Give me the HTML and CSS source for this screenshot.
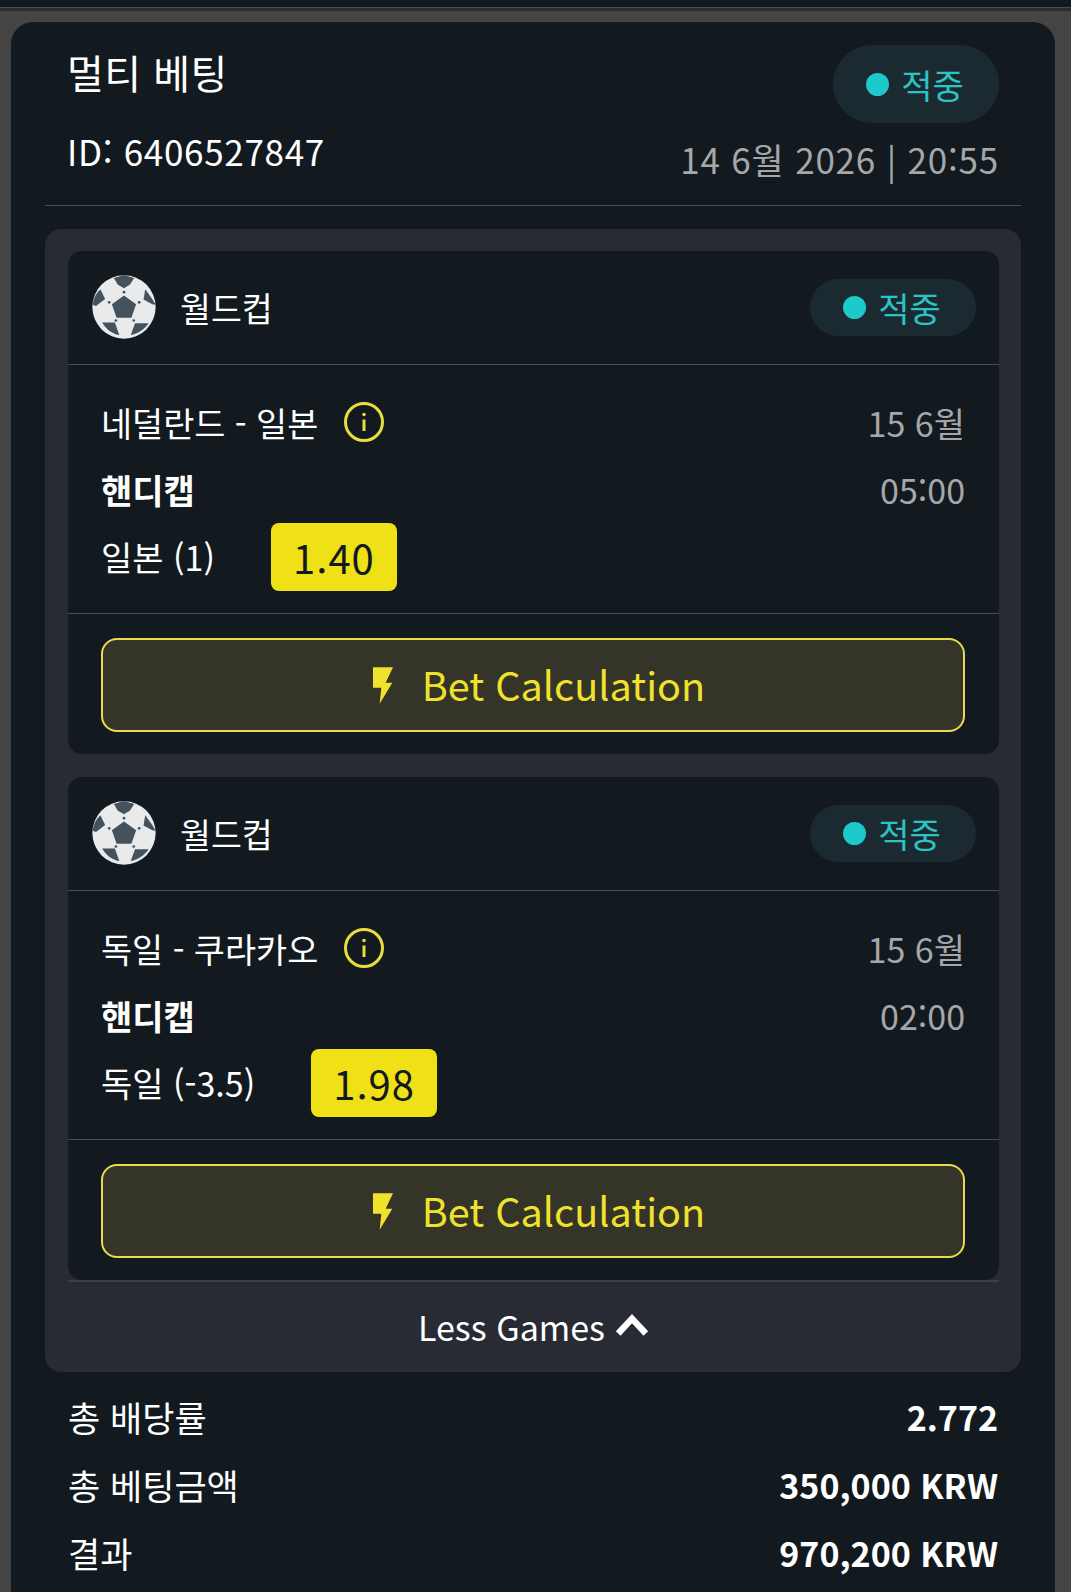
FILE: index.html
```html
<!DOCTYPE html>
<html lang="ko">
<head>
    <meta charset="UTF-8">
    <meta name="viewport" content="width=device-width, initial-scale=1.0">
    <title>멀티 베팅</title>
    <link rel="stylesheet" href="styles.css">
</head>
<body>
    <svg width="0" height="0" class="defs">
        <symbol id="ball" viewBox="37 15 190 190">
            <circle cx="132" cy="110" r="94" fill="#e8eaec"/>
            <g fill="#43525d">
                <path d="M132 76 168 102 154 142H110L96 102Z"/>
                <path d="M102 24 132 15 162 24 150 43 132 54 113 43Z"/>
                <path d="M62 57 76 86 49 107 39 103C41 84 49 69 62 57Z"/>
                <path d="M195 57 216 86 226 103 216 102 190 88Z"/>
                <path d="M67 156H105L118 193C96 190 80 176 67 156Z"/>
                <path d="M165 158H205C193 176 172 190 152 193Z"/>
                <circle cx="132" cy="66" r="4"/>
                <circle cx="88" cy="96" r="4"/>
                <circle cx="177" cy="96" r="4"/>
                <circle cx="108" cy="150" r="4"/>
                <circle cx="161" cy="150" r="4"/>
            </g>
        </symbol>
        <symbol id="info" viewBox="0 0 40 40">
            <circle cx="20" cy="20" r="18.5" fill="none" stroke="#e9dc3c" stroke-width="3"/>
            <path d="M20 17.5V29" stroke="#e9dc3c" stroke-width="3"/>
            <circle cx="20" cy="12.5" r="1.8" fill="#e9dc3c"/>
        </symbol>
        <symbol id="bolt" viewBox="0 0 60 110">
            <path d="M0 0H60L38 47H58L20 110 25 62H0Z" fill="#f0e22c"/>
        </symbol>
    </svg>

    <div class="topbar"></div>

    <div class="bet-card">
        <div class="bet-head">
            <div class="bet-head-left">
                <div class="bet-title">멀티 베팅</div>
                <div class="bet-id">ID: 6406527847</div>
            </div>
            <div class="bet-head-right">
                <div class="status"><span class="status-dot"></span>적중</div>
                <div class="bet-date">14 6월 2026 | 20:55</div>
            </div>
        </div>

        <div class="games">
            <div class="game">
                <div class="game-head">
                    <svg class="ball"><use href="#ball"/></svg>
                    <span class="league">월드컵</span>
                    <div class="status status-small"><span class="status-dot"></span>적중</div>
                </div>
                <div class="game-body">
                    <div class="game-row game-row-first">
                        <div class="match">네덜란드 - 일본 <svg class="info"><use href="#info"/></svg></div>
                        <div class="game-time">15 6월</div>
                    </div>
                    <div class="game-row">
                        <div class="market">핸디캡</div>
                        <div class="game-time">05:00</div>
                    </div>
                    <div class="pick">
                        <span>일본 (1)</span>
                        <span class="odds">1.40</span>
                    </div>
                </div>
                <div class="game-foot">
                    <button class="calc"><svg class="bolt"><use href="#bolt"/></svg>Bet Calculation</button>
                </div>
            </div>

            <div class="game">
                <div class="game-head">
                    <svg class="ball"><use href="#ball"/></svg>
                    <span class="league">월드컵</span>
                    <div class="status status-small"><span class="status-dot"></span>적중</div>
                </div>
                <div class="game-body">
                    <div class="game-row game-row-first">
                        <div class="match">독일 - 쿠라카오 <svg class="info"><use href="#info"/></svg></div>
                        <div class="game-time">15 6월</div>
                    </div>
                    <div class="game-row">
                        <div class="market">핸디캡</div>
                        <div class="game-time">02:00</div>
                    </div>
                    <div class="pick">
                        <span>독일 (-3.5)</span>
                        <span class="odds">1.98</span>
                    </div>
                </div>
                <div class="game-foot">
                    <button class="calc"><svg class="bolt"><use href="#bolt"/></svg>Bet Calculation</button>
                </div>
            </div>

            <div class="less">
                Less Games
                <svg class="chevron" viewBox="0 0 32 22"><path d="M3 19 16 5 29 19" fill="none" stroke="#ffffff" stroke-width="6"/></svg>
            </div>
        </div>

        <div class="totals">
            <div class="total-row"><span>총 배당률</span><b>2.772</b></div>
            <div class="total-row"><span>총 베팅금액</span><b>350,000 KRW</b></div>
            <div class="total-row"><span>결과</span><b>970,200 KRW</b></div>
        </div>
    </div>
</body>
</html>
```

FILE: styles.css
```css
body {
    font-family: "Noto Sans CJK KR", "Noto Sans", sans-serif;
    background-color: #444444;
    color: #ffffff;
    margin: 0;
    height: 1592px;
    overflow: hidden;
    font-size: 34px;
}
.defs {
    display: block;
    height: 0;
}
.topbar {
    height: 7px;
    background-color: #131a1f;
    border-bottom: 1px solid #4a4d4f;
    box-shadow: 0 3px 0 #2a2d2f;
}
.bet-card {
    margin: 14px 16px 0 11px;
    padding: 0 34px;
    background-color: #131a1f;
    border-radius: 22px 22px 0 0;
    height: 1570px;
}
.bet-head {
    display: flex;
    justify-content: space-between;
    height: 183px;
    padding: 0 22px;
    border-bottom: 1px solid #4b4f52;
}
.bet-title {
    font-size: 40px;
    line-height: 52px;
    margin-top: 24px;
    letter-spacing: 0.5px;
}
.bet-id {
    font-size: 35px;
    line-height: 46px;
    margin-top: 30px;
    letter-spacing: 0.7px;
}
.bet-head-right {
    display: flex;
    flex-direction: column;
    align-items: flex-end;
    padding-top: 23px;
}
.status {
    display: flex;
    align-items: center;
    justify-content: center;
    gap: 12px;
    width: 164px;
    height: 78px;
    padding-right: 2px;
    border-radius: 39px;
    background-color: #1b2a30;
    color: #2cc3c5;
}
.status-small {
    height: 57px;
    margin-left: auto;
    margin-right: 23px;
}
.status-dot {
    width: 23px;
    height: 23px;
    border-radius: 50%;
    background-color: #1cc9cb;
}
.bet-date {
    font-size: 35px;
    color: #a5a7a9;
    line-height: 46px;
    margin-top: 13px;
    letter-spacing: 0.8px;
}
.games {
    margin-top: 23px;
    padding: 22px 22px 0 23px;
    background-color: #282b33;
    border-radius: 16px;
    height: 1121px;
}
.game {
    background-color: #131a1f;
    border-radius: 14px;
    margin-bottom: 23px;
    height: 503px;
}
.game:nth-child(2) {
    margin-bottom: 0;
}
.game-head {
    display: flex;
    align-items: center;
    height: 112px;
    padding: 0 0 1px 24px;
    border-bottom: 1px solid #4b4f52;
}
.ball {
    width: 64px;
    height: 64px;
}
.league {
    margin-left: 24px;
    font-size: 33.6px;
}
.game-body {
    height: 248px;
    padding: 0 34px 0 33px;
    border-bottom: 1px solid #4b4f52;
}
.game-row {
    display: flex;
    justify-content: space-between;
    align-items: center;
    height: 46px;
    padding-top: 21px;
}
.game-row-first {
    padding-top: 34px;
}
.match {
    display: flex;
    align-items: center;
    gap: 26px;
    font-size: 33.8px;
}
.info {
    width: 40px;
    height: 40px;
}
.market {
    font-weight: 700;
}
.game-time {
    color: #a5a7a9;
}
.pick {
    display: flex;
    align-items: center;
    gap: 56px;
    margin-top: 11px;
}
.pick span:first-child {
    margin-top: -2px;
}
.odds {
    display: block;
    width: 126px;
    height: 68px;
    line-height: 68px;
    text-align: center;
    background-color: #f0e116;
    color: #131a1f;
    border-radius: 8px;
    font-size: 40px;
    letter-spacing: 1px;
}
.game-foot {
    padding: 24px 34px 0 33px;
}
.calc {
    display: flex;
    align-items: center;
    justify-content: center;
    gap: 29px;
    width: 100%;
    height: 94px;
    padding: 0 0 4px 12px;
    background-color: #343428;
    border: 2px solid #e9dc4c;
    border-radius: 16px;
    color: #f0e22c;
    font-family: inherit;
    font-size: 39.6px;
    cursor: pointer;
}
.bolt {
    width: 20px;
    height: 37px;
    margin-top: 4px;
}
.less {
    display: flex;
    align-items: center;
    justify-content: center;
    gap: 10px;
    height: 88px;
    border-top: 2px solid #3d4046;
}
.chevron {
    width: 34px;
    height: 24px;
    margin-bottom: 2px;
}
.totals {
    padding: 10px 23px 0 23px;
}
.total-row {
    display: flex;
    justify-content: space-between;
    align-items: center;
    height: 68px;
    font-size: 35px;
}
.total-row b {
    font-size: 34px;
    font-weight: 700;
}
```
